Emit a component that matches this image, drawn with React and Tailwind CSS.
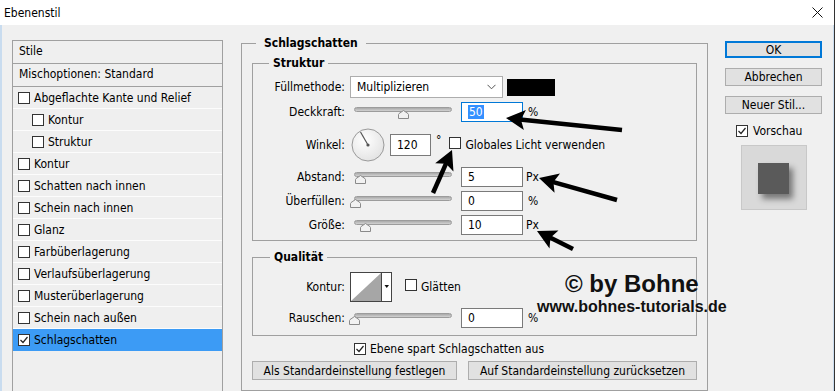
import React from 'react'

const ui = "font-['DejaVu_Sans_Condensed','DejaVu_Sans',sans-serif] text-[12px] text-black"

const styleRows = [
  { label: 'Abgeflachte Kante und Relief' },
  { label: 'Kontur', indent: true },
  { label: 'Struktur', indent: true },
  { label: 'Kontur' },
  { label: 'Schatten nach innen' },
  { label: 'Schein nach innen' },
  { label: 'Glanz' },
  { label: 'Farbüberlagerung' },
  { label: 'Verlaufsüberlagerung' },
  { label: 'Musterüberlagerung' },
  { label: 'Schein nach außen' },
  { label: 'Schlagschatten', checked: true, active: true },
]

function Check({ checked }) {
  return (
    <span className="inline-flex w-[12px] h-[12px] shrink-0 items-center justify-center border border-[#333] bg-white">
      {checked && (
        <svg width="10" height="10" viewBox="0 0 10 10">
          <path d="M1.5 5 L4 7.5 L8.5 2" fill="none" stroke="#222" strokeWidth="1.2" />
        </svg>
      )}
    </span>
  )
}

function Slider({ pos }) {
  return (
    <div className="relative ml-[4px] h-[14px] w-[98px] shrink-0">
      <div className="absolute left-0 right-0 top-[2px] h-[5px] rounded-full border border-[#9c9c9c] bg-gradient-to-b from-[#a9a9a9] to-[#d2d2d2]" />
      <svg className="absolute top-[5px]" style={{ left: pos - 5 }} width="11" height="9" viewBox="0 0 11 9">
        <path d="M0.5 8.5 V4.5 Q0.5 4 1 3.6 L5.5 0.5 L10 3.6 Q10.5 4 10.5 4.5 V8.5 Z" fill="#f2f2f2" stroke="#8a8a8a" />
      </svg>
    </div>
  )
}

function Num({ children, focus }) {
  return (
    <div
      className={`ml-[9px] flex h-[20px] w-[62px] shrink-0 items-center bg-white pl-[6px] ${
        focus ? 'border border-[#0078d7]' : 'border border-[#7a7a7a]'
      }`}
    >
      {children}
    </div>
  )
}

function Label({ children }) {
  return <div className="w-[97px] shrink-0 pr-[5px] text-right">{children}</div>
}

function Arrow({ x1, y1, x2, y2 }) {
  const dx = x2 - x1
  const dy = y2 - y1
  const len = Math.hypot(dx, dy)
  const ux = dx / len
  const uy = dy / len
  const L = 19
  const W = 10
  const bx = x2 - ux * L
  const by = y2 - uy * L
  const px = -uy
  const py = ux
  const pts = `${x2},${y2} ${bx + px * W},${by + py * W} ${bx + ux * 4},${by + uy * 4} ${bx - px * W},${by - py * W}`
  return (
    <g>
      <line x1={x1} y1={y1} x2={bx + ux * 5} y2={by + uy * 5} stroke="#000" strokeWidth="4.5" />
      <polygon points={pts} fill="#000" />
    </g>
  )
}

function Button({ children, primary, className = '' }) {
  return (
    <div
      className={`flex items-center justify-center bg-[#e1e1e1] ${
        primary ? 'border-2 border-[#0078d7]' : 'border border-[#adadad]'
      } ${className}`}
    >
      {children}
    </div>
  )
}

export default function App() {
  return (
    <div className={`relative h-[391px] w-[835px] overflow-hidden border-r border-[#333] bg-[#f0f0f0] ${ui}`}>
      {/* Title bar */}
      <div className="flex h-[25px] items-center justify-between bg-white pl-[4px] pr-[11px]">
        <span>Ebenenstil</span>
        <svg width="11" height="11" viewBox="0 0 11 11">
          <path d="M0.5 0.5 L10.5 10.5 M10.5 0.5 L0.5 10.5" stroke="#111" strokeWidth="1" />
        </svg>
      </div>

      <div className="flex h-[366px] border-l-2 border-r border-[#c9dcef] pt-[10px]">
        {/* Styles list */}
        <div className="ml-[10px] mt-[5px] h-[360px] w-[211px] shrink-0 border border-[#a0a0a0] bg-[#efefef]">
          <div className="flex h-[23px] items-center border-b border-[#a0a0a0] pb-[3px] pl-[6px]">Stile</div>
          <div className="flex h-[23px] items-center border-b border-[#a0a0a0] pb-[2px] pl-[6px]">Mischoptionen: Standard</div>
          {styleRows.map((r, i) => (
            <div
              key={i}
              className={`flex h-[22px] items-center gap-[4px] border-b ${
                r.active ? 'border-[#3c9bf5] bg-[#3c9bf5]' : 'border-[#fcfcfc]'
              } ${r.indent ? 'pl-[19px]' : 'pl-[5px]'}`}
            >
              <Check checked={r.checked} />
              <span>{r.label}</span>
            </div>
          ))}
        </div>

        {/* Settings */}
        <fieldset className="ml-[18px] min-w-0 w-[467px] shrink-0 border border-[#a0a0a0] px-[10px] pb-[40px]">
          <legend className="ml-[4px] px-[8px] font-bold leading-[16px]">Schlagschatten</legend>

          <fieldset className="mt-[4px] min-w-0 border border-[#a0a0a0] pb-[5px]">
            <legend className="ml-[16px] px-[4px] font-bold leading-[16px]">Struktur</legend>

            <div className="mt-[5px] flex h-[22px] items-center">
              <Label>Füllmethode:</Label>
              <div className="flex h-[22px] w-[153px] items-center justify-between border border-[#adadad] bg-white pl-[6px] pr-[6px]">
                <span>Multiplizieren</span>
                <svg width="9" height="6" viewBox="0 0 9 6">
                  <path d="M0.5 0.8 L4.5 4.8 L8.5 0.8" fill="none" stroke="#555" strokeWidth="1" />
                </svg>
              </div>
              <div className="ml-[4px] h-[17px] w-[48px] bg-black" />
            </div>

            <div className="mt-[4px] flex h-[20px] items-center">
              <Label>Deckkraft:</Label>
              <Slider pos={49} />
              <Num focus>
                <span className="bg-[#3390ff] px-[1px] leading-[14px] text-white">50</span>
              </Num>
              <span className="ml-[5px]">%</span>
            </div>

            <div className="mt-[6px] flex h-[34px] items-center">
              <Label>Winkel:</Label>
              <svg className="ml-[1px] shrink-0" width="34" height="34" viewBox="0 0 34 34">
                <defs>
                  <radialGradient id="dial" cx="0.4" cy="0.35" r="0.7">
                    <stop offset="0" stopColor="#ffffff" />
                    <stop offset="1" stopColor="#e2e2e2" />
                  </radialGradient>
                </defs>
                <circle cx="17" cy="17" r="16" fill="url(#dial)" stroke="#9a9a9a" />
                <line x1="17" y1="17" x2="9.5" y2="4" stroke="#555" strokeWidth="1.2" />
                <circle cx="17" cy="17" r="1.6" fill="#555" />
              </svg>
              <div className="ml-[5px] flex h-[22px] w-[41px] items-center border border-[#7a7a7a] bg-white pl-[6px]">120</div>
              <span className="ml-[5px] self-start pt-[6px] leading-[12px]">°</span>
              <span className="ml-[8px]">
                <Check />
              </span>
              <span className="ml-[4px]">Globales Licht verwenden</span>
            </div>

            <div className="mt-[5px] flex h-[20px] items-center">
              <Label>Abstand:</Label>
              <Slider pos={6} />
              <Num>5</Num>
              <span className="ml-[3px]">Px</span>
            </div>

            <div className="mt-[4px] flex h-[20px] items-center">
              <Label>Überfüllen:</Label>
              <Slider pos={1} />
              <Num>0</Num>
              <span className="ml-[5px]">%</span>
            </div>

            <div className="mt-[4px] flex h-[20px] items-center">
              <Label>Größe:</Label>
              <Slider pos={11} />
              <Num>10</Num>
              <span className="ml-[3px]">Px</span>
            </div>
          </fieldset>

          <fieldset className="mt-[8px] min-w-0 border border-[#a0a0a0] pb-[7px]">
            <legend className="ml-[17px] px-[4px] font-bold leading-[16px]">Qualität</legend>

            <div className="mt-[7px] flex h-[30px] items-center">
              <Label>Kontur:</Label>
              <svg className="shrink-0" width="42" height="30" viewBox="0 0 42 30">
                <rect x="0.5" y="0.5" width="41" height="29" fill="#fff" stroke="#444" />
                <polygon points="1,29 31,1 31,29" fill="#a6a6a6" />
                <line x1="31.5" y1="0.5" x2="31.5" y2="29.5" stroke="#444" />
                <polygon points="34.5,13 39,13 36.75,16" fill="#111" />
              </svg>
              <span className="ml-[13px]">
                <Check />
              </span>
              <span className="ml-[4px]">Glätten</span>
            </div>

            <div className="mt-[6px] flex h-[20px] items-center">
              <Label>Rauschen:</Label>
              <Slider pos={0} />
              <Num>0</Num>
              <span className="ml-[5px]">%</span>
            </div>
          </fieldset>

          <div className="mt-[6px] flex h-[14px] items-center gap-[4px] pl-[102px]">
            <Check checked />
            <span>Ebene spart Schlagschatten aus</span>
          </div>

          <div className="mt-[5px] flex gap-[11px]">
            <Button className="h-[19px] w-[205px]">Als Standardeinstellung festlegen</Button>
            <Button className="h-[19px] w-[229px]">Auf Standardeinstellung zurücksetzen</Button>
          </div>
        </fieldset>

        {/* Right column */}
        <div className="ml-[17px] mt-[6px] flex w-[97px] shrink-0 flex-col">
          <Button primary className="h-[17px]">OK</Button>
          <Button className="mt-[10px] h-[18px]">Abbrechen</Button>
          <Button className="mt-[10px] h-[18px]">Neuer Stil...</Button>
          <div className="mt-[10px] flex h-[13px] items-center gap-[5px] pl-[11px]">
            <Check checked />
            <span>Vorschau</span>
          </div>
          <div className="ml-[16px] mt-[8px] h-[65px] w-[66px] border border-[#c8c8c8] bg-[#d9d9d9] pl-[16px] pt-[17px]">
            <div className="h-[31px] w-[31px] bg-[#5a5a5a] shadow-[4px_5px_6px_rgba(0,0,0,0.45)]" />
          </div>
        </div>
      </div>

      {/* Watermark */}
      <div className="absolute left-[565px] top-[272px] font-['Liberation_Sans',Arial,sans-serif] text-[24px] font-bold leading-none text-[#111]">
        © by Bohne
      </div>
      <div className="absolute left-[537px] top-[299px] font-['Liberation_Sans',Arial,sans-serif] text-[16px] font-bold leading-none text-[#111]">
        www.bohnes-tutorials.de
      </div>

      {/* Annotation arrows */}
      <svg className="pointer-events-none absolute left-0 top-0" width="835" height="391">
        <Arrow x1={622} y1={130} x2={506} y2={118} />
        <Arrow x1={433} y1={193} x2={452} y2={150} />
        <Arrow x1={617} y1={200} x2={539} y2={178} />
        <Arrow x1={573} y1={249} x2={537} y2={231} />
      </svg>
    </div>
  )
}
